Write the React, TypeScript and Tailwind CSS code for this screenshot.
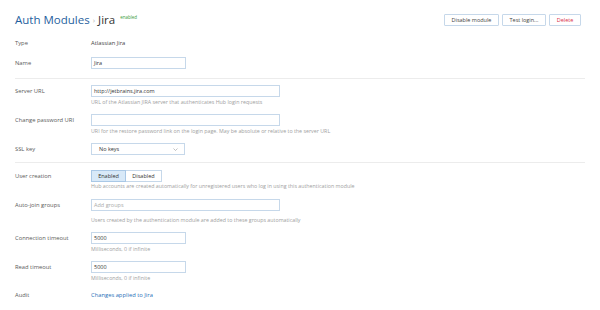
import React from 'react';

const font = { fontFamily: '"Open Sans", "Noto Sans", sans-serif' };

const Row = ({ label, className, children }: { label: string; className?: string; children: React.ReactNode }) => (
    <div className={`flex items-center ${className ?? ''}`}>
        <div className="w-[76px] shrink-0 text-[5.8px] text-[#5a5a5a]">{label}</div>
        <div className="flex items-center">{children}</div>
    </div>
);

const Help = ({ className, children }: { className?: string; children: React.ReactNode }) => (
    <div className={`pl-[76px] h-[8px] flex items-center text-[5.3px] text-[#a0a0a0] whitespace-nowrap ${className ?? ''}`}>
        {children}
    </div>
);

const Input = ({ value, placeholder, wide }: { value?: string; placeholder?: string; wide?: boolean }) => (
    <div
        className={`h-[12px] ${wide ? 'w-[189px]' : 'w-[95px]'} border border-[#c6d8ea] bg-white flex items-center px-[2px] text-[5.5px] ${value ? 'text-[#333]' : 'text-[#aaa]'}`}
    >
        {value ?? placeholder}
    </div>
);

const App = () => {
    return (
        <div className="w-[600px] h-[310px] bg-white overflow-hidden px-[15px]" style={font}>
            {/* header */}
            <div className="mt-[14px] h-[12px] flex items-center justify-between">
                <div className="flex items-center text-[11.5px] leading-none">
                    <span className="text-[#1f5f9e]">Auth Modules</span>
                    <span className="text-[#b5b5b5] text-[8px] mx-[3px]">›</span>
                    <span className="text-[#333]">Jira</span>
                    <span className="text-[#3a9c3a] text-[4.5px] ml-[5px] -mt-[6px]">enabled</span>
                </div>
                <div className="flex gap-[3px] mr-[4px]">
                    <button className="h-[12px] w-[55px] border border-[#c6d8ea] rounded-[1px] text-[5.5px] text-[#444] bg-white">Disable module</button>
                    <button className="h-[12px] w-[44px] border border-[#c6d8ea] rounded-[1px] text-[5.5px] text-[#444] bg-white">Test login...</button>
                    <button className="h-[12px] w-[32px] border border-[#c6d8ea] rounded-[1px] text-[5.5px] text-[#d9304a] bg-white">Delete</button>
                </div>
            </div>

            <Row label="Type" className="mt-[11px] h-[12px]">
                <span className="text-[5.8px] text-[#444]">Atlassian Jira</span>
            </Row>
            <Row label="Name" className="mt-[8px] h-[12px]">
                <Input value="Jira" />
            </Row>
            <div className="mt-[9px] h-px bg-[#ececec]" />

            <Row label="Server URL" className="mt-[6px] h-[12px]">
                <Input value="http://jetbrains.jira.com" wide />
            </Row>
            <Help className="mt-[2px]">URL of the Atlassian JIRA server that authenticates Hub login requests</Help>
            <Row label="Change password URI" className="mt-[7px] h-[12px]">
                <Input wide />
            </Row>
            <Help className="mt-[2px]">URI for the restore password link on the login page. May be absolute or relative to the server URL</Help>
            <Row label="SSL key" className="mt-[7px] h-[12px]">
                <div className="h-[12px] w-[94px] border border-[#c6d8ea] bg-white flex items-center justify-between pl-[7px] pr-[6px] text-[5.5px] text-[#333]">
                    <span>No keys</span>
                    <svg width="5" height="3" viewBox="0 0 5 3" fill="none">
                        <path d="M0.5 0.5 L2.5 2.5 L4.5 0.5" stroke="#999" strokeWidth="0.6" />
                    </svg>
                </div>
            </Row>
            <div className="mt-[7px] h-px bg-[#ececec]" />

            <Row label="User creation" className="mt-[7px] h-[12px]">
                <div className="flex h-[12px] text-[5.5px]">
                    <div className="w-[35px] flex items-center justify-center bg-[#d8e9f8] border border-[#a9c8e6] text-[#333]">Enabled</div>
                    <div className="w-[36px] flex items-center justify-center bg-white border border-l-0 border-[#c6d8ea] text-[#333]">Disabled</div>
                </div>
            </Row>
            <Help className="mt-[1px]">Hub accounts are created automatically for unregistered users who log in using this authentication module</Help>
            <Row label="Auto-join groups" className="mt-[8px] h-[12px]">
                <Input placeholder="Add groups" wide />
            </Row>
            <Help className="mt-[6px]">Users created by the authentication module are added to these groups automatically</Help>
            <Row label="Connection timeout" className="mt-[7px] h-[12px]">
                <Input value="5000" />
            </Row>
            <Help className="mt-[2px]">Milliseconds, 0 if infinite</Help>
            <Row label="Read timeout" className="mt-[7px] h-[12px]">
                <Input value="5000" />
            </Row>
            <Help className="mt-[2px]">Milliseconds, 0 if infinite</Help>
            <Row label="Audit" className="mt-[6px] h-[12px]">
                <span className="text-[5.8px] text-[#1f6fb8]">Changes applied to Jira</span>
            </Row>
        </div>
    );
};

export default App;
